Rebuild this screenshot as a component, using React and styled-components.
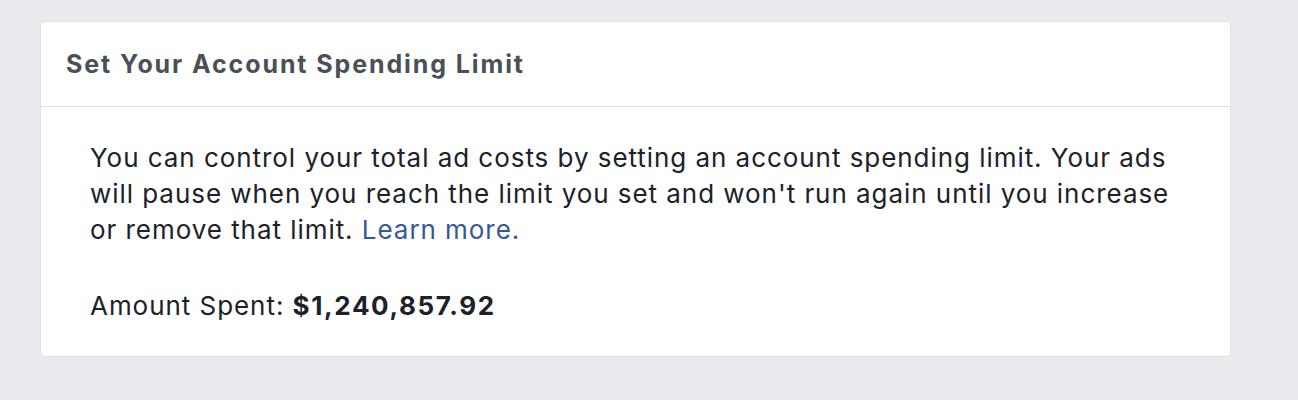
import React from "react";
import styled, { createGlobalStyle } from "styled-components";

const Global = createGlobalStyle`
  html, body { margin: 0; padding: 0; background: #e9ebee; }
  body { font-family: Inter, "Liberation Sans", sans-serif; -webkit-font-smoothing: antialiased; }
`;

const Page = styled.div`
  padding: 21px 67px 44px 40px;
  min-height: 400px;
  box-sizing: border-box;
`;

const Card = styled.section`
  background: #fff;
  border: 1px solid #dddfe2;
  border-radius: 4px;
  width: 1191px;
  box-sizing: border-box;
`;

const Header = styled.header`
  height: 85px;
  box-sizing: border-box;
  border-bottom: 1px solid #dddfe2;
  padding: 0 25px;
  display: flex;
  align-items: center;
`;

const Title = styled.h2`
  margin: 0;
  font-size: 25px;
  font-weight: 700;
  color: #4b4f56;
  letter-spacing: 1.9px;
`;

const Body = styled.div`
  padding: 33px 49px 32px 49px;
  color: #1d2129;
  font-size: 26px;
  line-height: 36px;
  letter-spacing: 0.95px;
`;

const Paragraph = styled.p`
  margin: 0 0 40px;
`;

const Link = styled.a`
  color: #365899;
  text-decoration: none;
`;

const Amount = styled.p`
  margin: 0;
`;

const Strong = styled.strong`
  font-weight: 700;
  letter-spacing: 1.6px;
`;

export default function App() {
  return (
    <>
      <Global />
      <Page>
        <Card>
          <Header>
            <Title>Set Your Account Spending Limit</Title>
          </Header>
          <Body>
            <Paragraph>
              You can control your total ad costs by setting an account spending limit. Your ads will pause when you reach the limit you set and won't run again until you increase or remove that limit.{" "}
              <Link href="#">Learn more.</Link>
            </Paragraph>
            <Amount>
              Amount Spent: <Strong>$1,240,857.92</Strong>
            </Amount>
          </Body>
        </Card>
      </Page>
    </>
  );
}
